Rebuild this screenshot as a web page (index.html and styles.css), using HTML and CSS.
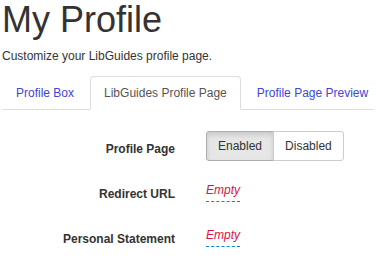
FILE: index.html
```html
<!DOCTYPE html>
<html lang="en">
<head>
  <meta charset="UTF-8">
  <title>My Profile</title>
  <link rel="stylesheet" href="styles.css">
</head>
<body>
  <div class="page">
    <h1 class="page-title">My Profile</h1>
    <p class="page-intro">Customize your LibGuides profile page.</p>

    <ul class="tabs">
      <li class="tab"><a href="#">Profile Box</a></li>
      <li class="tab active"><a href="#">LibGuides Profile Page</a></li>
      <li class="tab"><a href="#">Profile Page Preview</a></li>
    </ul>

    <div class="form">
      <div class="form-row">
        <label class="form-label">Profile Page</label>
        <div class="btn-group">
          <button class="btn active">Enabled</button>
          <button class="btn">Disabled</button>
        </div>
      </div>
      <div class="form-row">
        <label class="form-label">Redirect URL</label>
        <div><a href="#" class="editable">Empty</a></div>
      </div>
      <div class="form-row">
        <label class="form-label">Personal Statement</label>
        <div><a href="#" class="editable">Empty</a></div>
      </div>
    </div>
  </div>
</body>
</html>
```

FILE: styles.css
```css
body {
  margin: 0;
  font-family: "Liberation Sans", Arial, sans-serif;
  font-size: 12px;
  line-height: 18px;
  color: #333;
  background: #fff;
  overflow: hidden;
}

.page {
  padding: 0 2px;
}

.page-title {
  margin: 0;
  font-size: 36px;
  line-height: 40px;
  font-weight: normal;
  color: #333;
}

.page-intro {
  margin: 7px 0 11px;
}

/* tabs */
.tabs {
  display: flex;
  list-style: none;
  margin: 0;
  padding: 0;
  border-bottom: 1px solid #ddd;
  white-space: nowrap;
}

.tab {
  flex-shrink: 0;
  margin-bottom: -1px;
  margin-right: 2px;
}

.tab a {
  display: block;
  padding: 7px 13px;
  border: 1px solid transparent;
  border-radius: 4px 4px 0 0;
  color: #4444d6;
  text-decoration: none;
}

.tab.active a {
  color: #555;
  background: #fff;
  border-color: #ddd #ddd transparent;
}

/* form */
.form {
  padding-top: 21px;
}

.form-row {
  display: grid;
  grid-template-columns: 173px 1fr;
  column-gap: 31px;
  min-height: 30px;
  margin-bottom: 15px;
}

.form-label {
  padding-top: 9px;
  text-align: right;
  font-weight: bold;
  white-space: nowrap;
}

.btn-group {
  display: flex;
}

.btn {
  height: 30px;
  padding: 0 11px;
  font-family: inherit;
  font-size: 12px;
  color: #333;
  background: #fff;
  border: 1px solid #ccc;
  cursor: pointer;
}

.btn:first-child {
  border-radius: 3px 0 0 3px;
}

.btn:last-child {
  margin-left: -1px;
  border-radius: 0 3px 3px 0;
}

.btn.active {
  background: #e6e6e6;
  border-color: #adadad;
  box-shadow: inset 0 3px 5px rgba(0, 0, 0, 0.125);
}

.editable {
  display: inline-block;
  padding: 5px 0 2px;
  color: #d14;
  font-style: italic;
  text-decoration: none;
  border-bottom: 1px dashed #08c;
}
```
